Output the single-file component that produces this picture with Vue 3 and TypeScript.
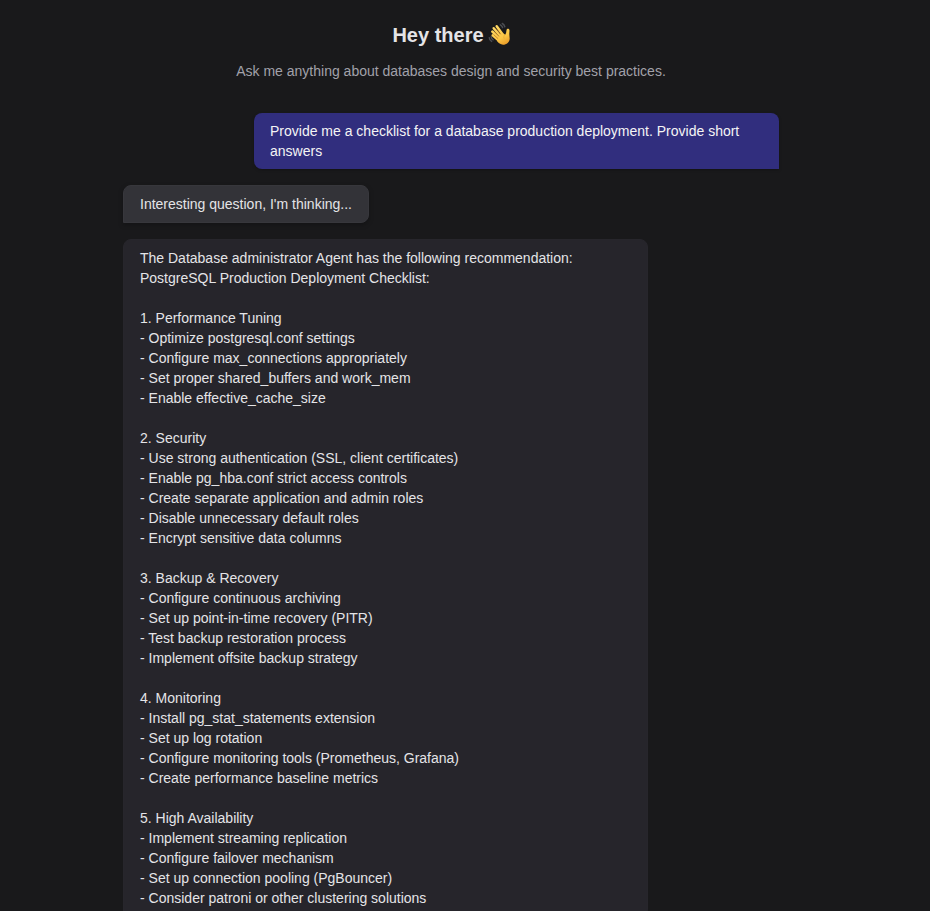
<script setup lang="ts">
interface Section {
  title: string
  items: string[]
}

const intro: string[] = [
  'The Database administrator Agent has the following recommendation:',
  'PostgreSQL Production Deployment Checklist:',
]

const sections: Section[] = [
  {
    title: 'Performance Tuning',
    items: [
      'Optimize postgresql.conf settings',
      'Configure max_connections appropriately',
      'Set proper shared_buffers and work_mem',
      'Enable effective_cache_size',
    ],
  },
  {
    title: 'Security',
    items: [
      'Use strong authentication (SSL, client certificates)',
      'Enable pg_hba.conf strict access controls',
      'Create separate application and admin roles',
      'Disable unnecessary default roles',
      'Encrypt sensitive data columns',
    ],
  },
  {
    title: 'Backup & Recovery',
    items: [
      'Configure continuous archiving',
      'Set up point-in-time recovery (PITR)',
      'Test backup restoration process',
      'Implement offsite backup strategy',
    ],
  },
  {
    title: 'Monitoring',
    items: [
      'Install pg_stat_statements extension',
      'Set up log rotation',
      'Configure monitoring tools (Prometheus, Grafana)',
      'Create performance baseline metrics',
    ],
  },
  {
    title: 'High Availability',
    items: [
      'Implement streaming replication',
      'Configure failover mechanism',
      'Set up connection pooling (PgBouncer)',
      'Consider patroni or other clustering solutions',
    ],
  },
]
</script>

<template>
  <main class="page">
    <div class="chat">
      <header class="header">
        <h1 class="title">
          <span>Hey there</span>
          <svg class="wave" viewBox="0 0 24 24" aria-hidden="true">
            <defs>
              <linearGradient id="skin" gradientUnits="userSpaceOnUse" x1="6" y1="3" x2="17" y2="23">
                <stop offset="0" stop-color="#ffda68" />
                <stop offset="0.65" stop-color="#fcc645" />
                <stop offset="1" stop-color="#e99b28" />
              </linearGradient>
            </defs>
            <g fill="none" stroke="#4b4d52" stroke-width="1.5" stroke-linecap="round">
              <path d="M12.300 2.900q1.700.8 2.300 2.700M14.300 1.500q1.900 1 2.500 3.200" />
              <path d="M3.200 14.700q.2 2 1.900 3.100M1.300 15.700q.2 2.500 2.300 3.700" />
            </g>
            <g fill="none" stroke="url(#skin)" stroke-width="2.500" stroke-linecap="round">
              <path d="m8.700 4.300 5.800 8" />
              <path d="m5.700 6.200 6.600 7.800" />
              <path d="m4.300 9.500 6.900 6.700" />
              <path d="m4.700 13.300 5.500 4.800" />
            </g>
            <path
              d="m13 9.900 3.500 2.300c.9.500 1.400 0 1.500-.8l.5-3.200c.4-2.100 3.100-1.700 3 .4l-.2 3.500c0 1.500.4 2.800.4 4.300 0 3.500-3.100 6.300-6.700 6.300-2.600 0-4.400-1.500-6-3.600Z"
              fill="url(#skin)"
            />
            <path
              d="m8.700 7.100 3.900 5M6.900 10.200l3.800 4M6.300 13.200l3.500 3.200"
              fill="none"
              stroke="#bd7924"
              stroke-width=".65"
              stroke-linecap="round"
            />
            <path
              d="M17.600 12c-1.700 1-2.300 2.500-1.600 4.300"
              fill="none"
              stroke="#e2a131"
              stroke-width=".6"
              stroke-linecap="round"
            />
          </svg>
        </h1>
        <p class="subtitle">Ask me anything about databases design and security best practices.</p>
      </header>

      <section class="messages">
        <div class="bubble user">
          Provide me a checklist for a database production deployment. Provide short answers
        </div>
        <div class="bubble thinking">Interesting question, I'm thinking...</div>
        <article class="bubble answer">
          <p v-for="line in intro" :key="line">{{ line }}</p>
          <section v-for="(section, index) in sections" :key="section.title" class="group">
            <p>{{ index + 1 }}. {{ section.title }}</p>
            <p v-for="item in section.items" :key="item">- {{ item }}</p>
          </section>
        </article>
      </section>
    </div>
  </main>
</template>

<style>
body {
  margin: 0;
  background: #19191b;
}
</style>

<style scoped>
.page {
  box-sizing: border-box;
  height: 911px;
  overflow: hidden;
  padding: 20px 28px 0 0;
  background: #19191b;
  color: #e4e4e7;
  font-family: "Liberation Sans", Arial, sans-serif;
  font-size: 14px;
  line-height: 20px;
}

.chat {
  width: 656px;
  margin: 0 auto;
}

p,
h1 {
  margin: 0;
}

.header {
  display: flex;
  flex-direction: column;
  align-items: center;
  gap: 11px;
}

.title {
  display: flex;
  align-items: center;
  gap: 4px;
  padding-left: 2px;
  font-size: 20px;
  line-height: 30px;
  font-weight: 700;
}

.wave {
  width: 24px;
  height: 24px;
  margin-top: -2px;
}

.subtitle {
  color: #a1a1aa;
}

.messages {
  display: flex;
  flex-direction: column;
  align-items: flex-start;
  gap: 16px;
  margin-top: 32px;
}

.bubble {
  box-sizing: border-box;
  max-width: 525px;
  padding: 8px 16px;
  border-radius: 8px;
}

.user {
  align-self: flex-end;
  border-bottom-right-radius: 0;
  background: #312e7e;
  color: #f4f4f5;
  box-shadow: 0 1px 3px rgba(0, 0, 0, 0.25);
}

.thinking {
  border: 1px solid #37373c;
  border-bottom-left-radius: 0;
  background: #333338;
  box-shadow: 0 2px 5px rgba(0, 0, 0, 0.25);
}

.answer {
  width: 525px;
  border: 1px solid #27262c;
  border-bottom-left-radius: 0;
  background: #26252b;
}

.group {
  margin-top: 20px;
}
</style>
